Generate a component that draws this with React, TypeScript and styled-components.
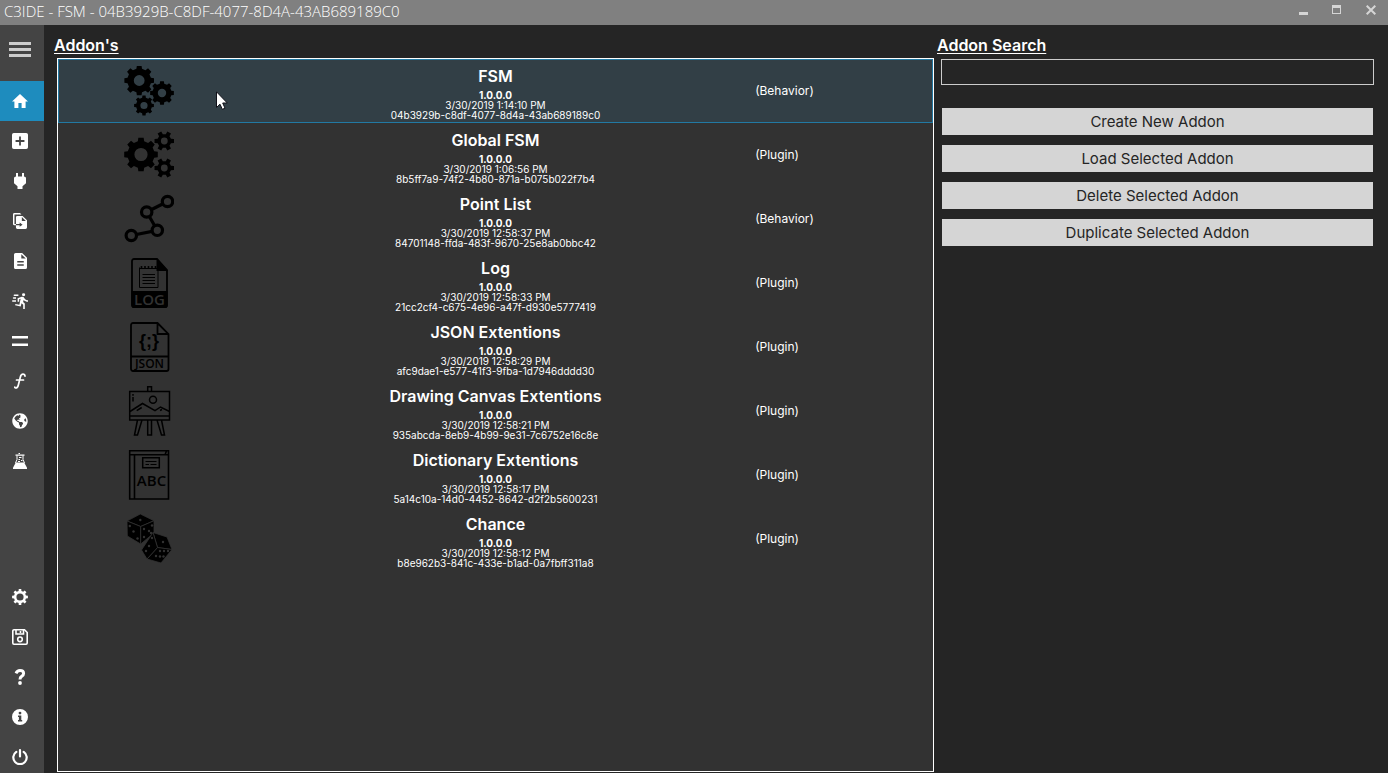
import React from "react";
import styled, { createGlobalStyle } from "styled-components";
import { FaGlobeAmericas } from "react-icons/fa";

const gothic = `"Century Gothic", Inter, "Liberation Sans", sans-serif`;
const segoe = `"Segoe UI Light", "Open Sans", "Noto Sans", sans-serif`;

const GlobalStyle = createGlobalStyle`
  * { box-sizing: border-box; }
  body { margin: 0; background: #252525; color: #fff; font-family: ${gothic}; }
  button, input { font-family: inherit; }
`;

const Window = styled.div`
  min-height: 100vh;
  display: flex;
  flex-direction: column;
`;

const TitleBar = styled.header`
  height: 25px;
  flex: none;
  display: flex;
  justify-content: space-between;
  align-items: stretch;
  background: #808080;
`;

const WindowTitle = styled.h1`
  margin: 0;
  padding-left: 4px;
  font: 300 15px/22px ${segoe};
`;

const WindowControls = styled.div`
  display: flex;
`;

const WindowButton = styled.button`
  width: 34px;
  padding: 5px 0 0;
  border: 0;
  background: none;
  color: #d5d5d5;
  display: flex;
  justify-content: center;
  align-items: flex-start;
`;

const Workspace = styled.div`
  flex: 1;
  display: flex;
`;

const Sidebar = styled.nav`
  width: 44px;
  flex: none;
  display: flex;
  flex-direction: column;
  justify-content: space-between;
  background: #444;
`;

const NavGroup = styled.div<{ $gap?: number }>`
  display: flex;
  flex-direction: column;
  gap: ${(p) => p.$gap ?? 0}px;
`;

const NavButton = styled.button<{ $active?: boolean; $height?: number }>`
  height: ${(p) => p.$height ?? 40}px;
  padding: 0 4px 0 0;
  border: 0;
  background: ${(p) => (p.$active ? "#1e8cbe" : "transparent")};
  color: #fff;
  display: flex;
  align-items: center;
  justify-content: center;
`;

const MenuButton = styled(NavButton)`
  margin-bottom: 8px;
`;

const Main = styled.main`
  flex: 1;
  min-width: 0;
  display: grid;
  grid-template-columns: minmax(0, 445fr) minmax(0, 227fr);
`;

const Column = styled.section<{ $inset: number }>`
  display: flex;
  flex-direction: column;
  padding: 8px 0 1px ${(p) => p.$inset}px;
`;

const Heading = styled.h2`
  margin: 0;
  font-size: 16px;
  line-height: 25px;
  font-weight: 600;
  text-decoration: underline;
  text-underline-offset: 2px;
`;

const AddonList = styled.ul`
  flex: 1;
  margin: 0 0 0 3px;
  padding: 0;
  list-style: none;
  background: #323232;
  border: 1px solid #fff;
`;

const AddonRow = styled.li<{ $selected: boolean }>`
  position: relative;
  height: 64px;
  display: grid;
  grid-template-columns: 1fr 2.8fr 1fr;
  align-items: center;
  border: 1px solid ${(p) => (p.$selected ? "#2279a3" : "transparent")};
  background: ${(p) => (p.$selected ? "#323f46" : "transparent")};
`;

const AddonIcon = styled.svg`
  width: 50px;
  height: 50px;
  margin-right: 2px;
  justify-self: center;
`;

const AddonInfo = styled.div`
  display: flex;
  flex-direction: column;
  align-items: center;
  padding-top: 2px;
  text-align: center;
  white-space: nowrap;
`;

const AddonName = styled.strong`
  font-size: 16px;
  line-height: 24px;
  font-weight: 600;
  margin-bottom: 2px;
`;

const AddonDetail = styled.span<{ $bold?: boolean }>`
  font-size: 10px;
  line-height: 10px;
  font-weight: ${(p) => (p.$bold ? 700 : 400)};
`;

const AddonType = styled.span`
  padding-left: 5px;
  font-size: 12px;
  line-height: 16px;
`;

const Pointer = styled.svg`
  position: absolute;
  left: 157px;
  top: 31px;
  pointer-events: none;
`;

const SearchBox = styled.input`
  height: 26px;
  margin: 1px 14px 23px 4px;
  padding: 0 4px;
  border: 1px solid #ccc;
  border-radius: 0;
  background: #252525;
  color: #fff;
  font-size: 15px;
`;

const Actions = styled.div`
  display: flex;
  flex-direction: column;
  gap: 10px;
  margin: 0 15px 0 5px;
`;

const ActionButton = styled.button`
  height: 27px;
  padding: 0;
  border: 0;
  background: #d5d5d5;
  color: #252525;
  font-size: 15px;
  line-height: 27px;
`;

/* Outline of a toothed wheel with a round hole, for use with the even-odd rule. */
function gear(cx: number, cy: number, r: number, hole: number, teeth = 8, depth = 0.2) {
  const step = (Math.PI * 2) / teeth;
  const root = r * (1 - depth);
  const at = (radius: number, a: number) =>
    `${(cx + radius * Math.cos(a)).toFixed(2)} ${(cy + radius * Math.sin(a)).toFixed(2)}`;
  const points: string[] = [];
  for (let i = 0; i < teeth; i++) {
    const a = i * step;
    points.push(at(root, a - step * 0.3), at(r, a - step * 0.2), at(r, a + step * 0.2), at(root, a + step * 0.3));
  }
  return `M${points.join("L")}ZM${cx - hole} ${cy}a${hole} ${hole} 0 1 0 ${hole * 2} 0a${hole} ${hole} 0 1 0 ${-hole * 2} 0Z`;
}

const panel = "#323232";

const pictures: Record<string, React.ReactNode> = {
  fsm: (
    <path fillRule="evenodd" d={gear(15.2, 14.5, 15, 5.4) + gear(38, 27, 12, 4.2) + gear(20, 39.5, 10, 3.6)} />
  ),
  global: (
    <path
      fillRule="evenodd"
      d={gear(17, 24.5, 17, 6.6) + gear(40.3, 11, 10, 3.4, 6, 0.3) + gear(40.3, 38, 10, 3.4, 6, 0.3)}
    />
  ),
  points: (
    <g stroke="#000" strokeWidth="3.2">
      <path fill="none" d="M43.5 7.5L22.7 18L33.3 36.3L7.3 41.5" />
      {[[43.5, 7.5], [22.7, 18], [33.3, 36.3], [7.3, 41.5]].map(([x, y]) => (
        <circle key={x} cx={x} cy={y} r="5.2" fill={panel} />
      ))}
    </g>
  ),
  log: (
    <>
      <path fill="none" stroke="#000" strokeWidth="1.8" d="M10 1H33L43 12V47a2 2 0 0 1-2 2H10a2 2 0 0 1-2-2V3a2 2 0 0 1 2-2Z" />
      <path d="M32.5 0L44 13H32.5ZM7.5 33H43.5V48a2 2 0 0 1-2 2H9.5a2 2 0 0 1-2-2Z" />
      <path fill="none" stroke="#000" d="M15.5 9.5V29.5H34V9.5M15.5 10.5H34M18.5 16.5H31M18.5 19.5H31M18.5 22.5H31M18.5 25.5H31" />
      <path fill="none" stroke="#000" strokeWidth="1.6" d="M17.5 11V8M21 11V8M24.5 11V8M28 11V8M31.5 11V8" />
      <text x="25.5" y="47" textAnchor="middle" fill={panel} fontFamily="Open Sans" fontWeight="600" fontSize="15">LOG</text>
    </>
  ),
  json: (
    <>
      <path fill="none" stroke="#000" strokeWidth="1.8" d="M9 1H33.5L44.5 12V47a2 2 0 0 1-2 2H9a2 2 0 0 1-2-2V3a2 2 0 0 1 2-2ZM33.5 1V12H44.5M7 34.5H44.5" />
      <text x="25.5" y="46" textAnchor="middle" fontFamily="Open Sans" fontWeight="600" fontSize="12">JSON</text>
      <text x="25" y="25" textAnchor="middle" fontFamily="Liberation Sans" fontWeight="700" fontSize="18">{"{;}"}</text>
    </>
  ),
  canvas: (
    <g fill="none" stroke="#000" strokeWidth="1.5">
      <path d="M5.7 5.5H45.5V34H5.7ZM5.7 30H45.5M23.7 5.5V.7H27.5V5.5M23.7 34V49H27.5V34M13.5 34L10.5 49H13.5L18 34M33 34L37.5 49H40.5L37.5 34" />
      <circle cx="29" cy="13.7" r="3.5" />
      <path d="M6 25.5L18.5 17.5L31 24.7L36.5 21L45.5 25.5M12.7 24.7L17.7 21.5M36 24.5L38 23.5M9 8V9.7M9 11V15.5" />
    </g>
  ),
  dictionary: (
    <>
      <path fill="none" stroke="#000" strokeWidth="1.6" d="M5.7 .7H44.5V49H5.7ZM5.7 4.7H44.5M10.5 4.7V49M42.5 1L41 4.7" />
      <path fill="none" stroke="#000" strokeWidth="1.5" d="M18.7 7.7H35.3V17.7H18.7Z" />
      <path fill="none" stroke="#000" d="M21.5 11.5H32.5M21.5 14.5H25M26.5 14.5H32.5" />
      <text x="27.5" y="36" textAnchor="middle" fontFamily="Open Sans" fontWeight="600" fontSize="15">ABC</text>
    </>
  ),
  dice: (
    <>
      <g stroke={panel} strokeWidth=".8">
        <path d="M16.3 0L30 6.7L16.7 12.5L3 7Z" />
        <path d="M3 7L16.7 12.5V30L3.3 22Z" />
        <path d="M30 6.7L16.7 12.5V30L30 19Z" />
        <path d="M29 18.5L43 23L48 35.5L33.5 33.5Z" />
        <path d="M33.5 33.5L48 35.5L37 49L23 45Z" />
        <path d="M29 18.5L33.5 33.5L23 45L17.5 36Z" />
      </g>
      <g fill={panel}>
        {[
          [16.3, 6], [5.8, 12], [9.5, 17.5], [13.5, 24.5], [20, 15], [25, 17], [28, 11.5], [20, 23], [27, 19],
          [39, 28], [28, 24], [25, 32], [22, 37], [36, 37], [40, 37], [44, 37], [32, 42], [36, 42.5], [39.5, 42.5],
        ].map(([x, y], i) => (
          <circle key={i} cx={x} cy={y} r="1.2" />
        ))}
      </g>
    </>
  ),
};

interface Glyph {
  label: string;
  box: string;
  width: number;
  height: number;
  shape: React.ReactNode;
}

const topGlyphs: Glyph[] = [
  { label: "Home", box: "2 3 20 17", width: 16, height: 14, shape: <path d="M10 20v-6h4v6h5v-8h3L12 3 2 12h3v8z" /> },
  {
    label: "New", box: "3 3 18 18", width: 16, height: 16,
    shape: <path d="M19 3H5a2 2 0 0 0-2 2v14a2 2 0 0 0 2 2h14a2 2 0 0 0 2-2V5a2 2 0 0 0-2-2zm-2 10h-4v4h-2v-4H7v-2h4V7h2v4h4v2z" />,
  },
  {
    label: "Plug", box: "6 3 12 18", width: 12, height: 16,
    shape: <path d="M16 7V3h-2v4h-4V3H8v4C7 7 6 8 6 9v5.5L9.5 18v3h5v-3l3.5-3.5V9c0-1-1-2-2-2z" />,
  },
  {
    label: "Files", box: "2 1 19 22", width: 14, height: 16,
    shape: (
      <path d="M14 12H19.5L14 6.5V12M8 5H15L21 11V21A2 2 0 0 1 19 23H8C6.89 23 6 22.1 6 21V18H11V20L15 17L11 14V16H6V7A2 2 0 0 1 8 5M13.5 3H4V16H6V18H4A2 2 0 0 1 2 16V3A2 2 0 0 1 4 1H11.5L13.5 3Z" />
    ),
  },
  {
    label: "Document", box: "4 2 16 20", width: 13, height: 16,
    shape: <path d="M14 2H6a2 2 0 0 0-2 2v16c0 1.1.89 2 2 2h12a2 2 0 0 0 2-2V8l-6-6zm2 16H8v-2h8v2zm0-4H8v-2h8v2zm-3-5V3.5L18.5 9H13z" />,
  },
  {
    label: "Run", box: "2 1 20 22", width: 16, height: 16,
    shape: (
      <path d="M16.5 5.5A2 2 0 0 0 18.5 3.5A2 2 0 0 0 16.5 1.5A2 2 0 0 0 14.5 3.5A2 2 0 0 0 16.5 5.5M12.9 19.4L13.9 15L16 17V23H18V15.5L15.9 13.5L16.5 10.5C17.89 12.09 19.89 13 22 13V11C20.24 11.03 18.6 10.11 17.7 8.6L16.7 7C16.34 6.4 15.7 6 15 6C14.7 6 14.5 6.1 14.2 6.1L9 8.3V13H11V9.6L12.8 8.9L11.2 17L6.3 16L5.9 18L12.9 19.4M4 9A1 1 0 0 1 3 8A1 1 0 0 1 4 7H7V9H4M5 5A1 1 0 0 1 4 4A1 1 0 0 1 5 3H10V5H5M3 13A1 1 0 0 1 2 12A1 1 0 0 1 3 11H7V13H3Z" />
    ),
  },
  { label: "Equals", box: "0 0 16 16", width: 16, height: 16, shape: <path d="M0 3H16V5.5H0ZM0 10.5H16V13H0Z" /> },
  {
    label: "Function", box: "0 0 16 16", width: 16, height: 16,
    shape: (
      <path fill="none" stroke="currentColor" strokeWidth="1.7" strokeLinecap="round"
        d="M13 3.2Q12.8 1.2 11 1.2Q9 1.2 8.3 4.2L6.3 12.2Q5.6 15 3.8 15Q2.8 15 2.8 14M4.5 7H11.5" />
    ),
  },
  {
    label: "World", box: "0 0 16 16", width: 16, height: 16,
    shape: <FaGlobeAmericas size={16} />,
  },
  {
    label: "Lab", box: "0 0 16 16", width: 16, height: 16,
    shape: (
      <>
        <path d="M3.5 1.5H12.5V2.7H3.5ZM6.5 0H8V1H6.5ZM3.8 9.5H12.2L15 14.8V16H1V14.8Z" />
        <path fill="none" stroke="currentColor" d="M5 2.5V6.5L3.5 10M11 2.5V6.5L12.5 10M7 4.5H9.5M6.5 6.5H8M9 7.5H10.5M6 8.5H8" />
      </>
    ),
  },
];

const bottomGlyphs: Glyph[] = [
  { label: "Settings", box: "0 0 16 16", width: 16, height: 16, shape: <path fillRule="evenodd" d={gear(8, 8, 8, 3.6, 8, 0.24)} /> },
  {
    label: "Save", box: "0 0 16 16", width: 16, height: 16,
    shape: (
      <g fill="none" stroke="currentColor" strokeWidth="1.6">
        <path d="M2 .8H12.5L15.2 3.5V14A1.2 1.2 0 0 1 14 15.2H2A1.2 1.2 0 0 1 .8 14V2A1.2 1.2 0 0 1 2 .8Z" />
        <path d="M4 1V5H11.5V1M8.5 2V4" />
        <circle cx="8" cy="10.3" r="2.3" />
      </g>
    ),
  },
  {
    label: "Help", box: "0 0 16 16", width: 16, height: 16,
    shape: (
      <>
        <path fill="none" stroke="currentColor" strokeWidth="3" d="M4 4.3Q5.2 1.6 8 1.6Q11.6 1.6 11.6 4.5Q11.6 6.3 9.6 7.4Q8 8.3 8 10.6" />
        <circle cx="8" cy="14" r="1.9" />
      </>
    ),
  },
  {
    label: "About", box: "0 0 16 16", width: 16, height: 16,
    shape: (
      <path fillRule="evenodd" d="M8 0a8 8 0 1 0 0 16a8 8 0 1 0 0-16ZM8 2.7a1.4 1.4 0 1 1 0 2.8a1.4 1.4 0 1 1 0-2.8ZM6 6.5H9.3V11H10.2V12.5H6V11H6.9V8H6Z" />
    ),
  },
  {
    label: "Exit", box: "0 0 16 16", width: 16, height: 16,
    shape: (
      <path fill="none" stroke="currentColor" strokeWidth="2.2" strokeLinecap="round" d="M8 1.1V7.5M4.3 2.9A6.7 6.7 0 1 0 11.7 2.9" />
    ),
  },
];

interface Addon {
  name: string;
  date: string;
  id: string;
  type: "Behavior" | "Plugin";
  icon: string;
}

const addons: Addon[] = [
  { name: "FSM", date: "3/30/2019 1:14:10 PM", id: "04b3929b-c8df-4077-8d4a-43ab689189c0", type: "Behavior", icon: "fsm" },
  { name: "Global FSM", date: "3/30/2019 1:06:56 PM", id: "8b5ff7a9-74f2-4b80-871a-b075b022f7b4", type: "Plugin", icon: "global" },
  { name: "Point List", date: "3/30/2019 12:58:37 PM", id: "84701148-ffda-483f-9670-25e8ab0bbc42", type: "Behavior", icon: "points" },
  { name: "Log", date: "3/30/2019 12:58:33 PM", id: "21cc2cf4-c675-4e96-a47f-d930e5777419", type: "Plugin", icon: "log" },
  { name: "JSON Extentions", date: "3/30/2019 12:58:29 PM", id: "afc9dae1-e577-41f3-9fba-1d7946dddd30", type: "Plugin", icon: "json" },
  { name: "Drawing Canvas Extentions", date: "3/30/2019 12:58:21 PM", id: "935abcda-8eb9-4b99-9e31-7c6752e16c8e", type: "Plugin", icon: "canvas" },
  { name: "Dictionary Extentions", date: "3/30/2019 12:58:17 PM", id: "5a14c10a-14d0-4452-8642-d2f2b5600231", type: "Plugin", icon: "dictionary" },
  { name: "Chance", date: "3/30/2019 12:58:12 PM", id: "b8e962b3-841c-433e-b1ad-0a7fbff311a8", type: "Plugin", icon: "dice" },
];

const actions = ["Create New Addon", "Load Selected Addon", "Delete Selected Addon", "Duplicate Selected Addon"];

const GlyphIcon = ({ glyph }: { glyph: Glyph }) => (
  <svg width={glyph.width} height={glyph.height} viewBox={glyph.box} preserveAspectRatio="none" fill="currentColor" aria-hidden="true">
    {glyph.shape}
  </svg>
);

export default function App() {
  return (
    <Window>
      <GlobalStyle />
      <TitleBar>
        <WindowTitle>C3IDE - FSM - 04B3929B-C8DF-4077-8D4A-43AB689189C0</WindowTitle>
        <WindowControls>
          <WindowButton aria-label="Minimize">
            <svg width="10" height="10" fill="currentColor"><path d="M1 7H10V10H1Z" /></svg>
          </WindowButton>
          <WindowButton aria-label="Maximize">
            <svg width="10" height="10" fill="currentColor"><path fillRule="evenodd" d="M0 0H9V9H0ZM1 3V8H8V3Z" /></svg>
          </WindowButton>
          <WindowButton aria-label="Close">
            <svg width="10" height="10" fill="none" stroke="currentColor" strokeWidth="2"><path d="M.7 .7L9.3 9.3M9.3 .7L.7 9.3" /></svg>
          </WindowButton>
        </WindowControls>
      </TitleBar>
      <Workspace>
        <Sidebar>
          <NavGroup>
            <MenuButton $height={48} aria-label="Menu">
              <svg width="22" height="15"><path fill="#ccc" d="M0 0H22V3H0ZM0 6H22V9H0ZM0 12H22V15H0Z" /></svg>
            </MenuButton>
            {topGlyphs.map((g, i) => (
              <NavButton key={g.label} $active={i === 0} aria-label={g.label}>
                <GlyphIcon glyph={g} />
              </NavButton>
            ))}
          </NavGroup>
          <NavGroup $gap={8}>
            {bottomGlyphs.map((g) => (
              <NavButton key={g.label} $height={32} aria-label={g.label}>
                <GlyphIcon glyph={g} />
              </NavButton>
            ))}
          </NavGroup>
        </Sidebar>
        <Main>
          <Column $inset={10}>
            <Heading id="addons-heading">Addon's</Heading>
            <AddonList role="listbox" aria-labelledby="addons-heading">
              {addons.map((a, i) => (
                <AddonRow key={a.id} role="option" aria-selected={i === 0} $selected={i === 0}>
                  <AddonIcon viewBox="0 0 50 50" aria-hidden="true">{pictures[a.icon]}</AddonIcon>
                  <AddonInfo>
                    <AddonName>{a.name}</AddonName>
                    <AddonDetail $bold>1.0.0.0</AddonDetail>
                    <AddonDetail>{a.date}</AddonDetail>
                    <AddonDetail>{a.id}</AddonDetail>
                  </AddonInfo>
                  <AddonType>({a.type})</AddonType>
                  {i === 0 && (
                    <Pointer width="12" height="19" viewBox="0 0 12 19" aria-hidden="true">
                      <path fill="#fff" stroke="#101018" d="M.5 .8V16.5L4 13.2L6.3 18.3L9 17.2L6.7 12H11.3Z" />
                    </Pointer>
                  )}
                </AddonRow>
              ))}
            </AddonList>
          </Column>
          <Column $inset={3}>
            <Heading as="label" htmlFor="addon-search">Addon Search</Heading>
            <SearchBox id="addon-search" type="text" />
            <Actions>
              {actions.map((label) => (
                <ActionButton key={label}>{label}</ActionButton>
              ))}
            </Actions>
          </Column>
        </Main>
      </Workspace>
    </Window>
  );
}
